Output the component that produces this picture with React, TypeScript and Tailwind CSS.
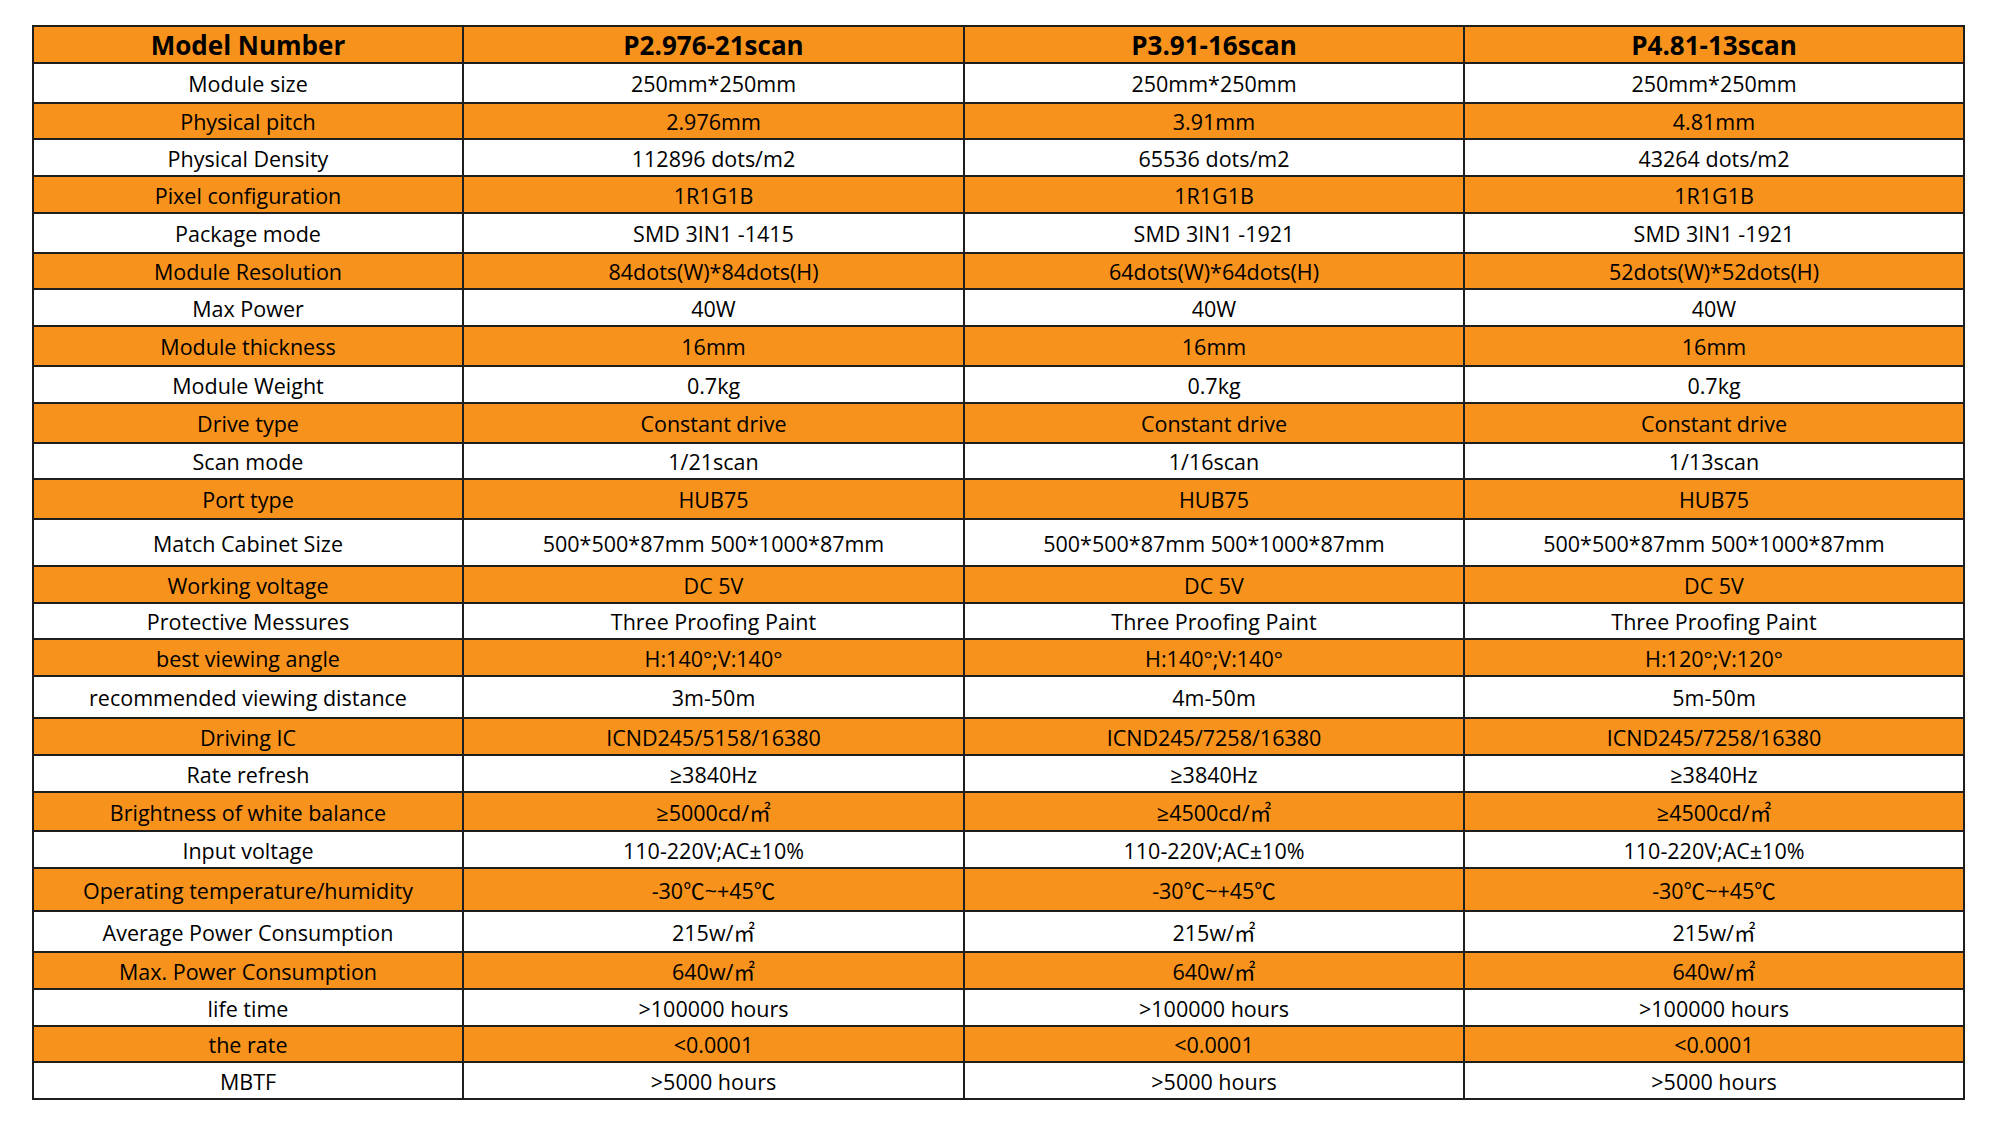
const font = { fontFamily: '"Open Sans", "Noto Sans CJK SC", sans-serif' };

// height class per row, taken from the spec sheet picture
const rows: { label: string; h: string; v: [string, string, string] }[] = [
  { label: "Module size", h: "h-[38px]", v: ["250mm*250mm", "250mm*250mm", "250mm*250mm"] },
  { label: "Physical pitch", h: "h-[34px]", v: ["2.976mm", "3.91mm", "4.81mm"] },
  { label: "Physical Density", h: "h-[35px]", v: ["112896 dots/m2", "65536 dots/m2", "43264 dots/m2"] },
  { label: "Pixel configuration", h: "h-[35px]", v: ["1R1G1B", "1R1G1B", "1R1G1B"] },
  { label: "Package mode", h: "h-[38px]", v: ["SMD 3IN1 -1415", "SMD 3IN1 -1921", "SMD 3IN1 -1921"] },
  { label: "Module Resolution", h: "h-[34px]", v: ["84dots(W)*84dots(H)", "64dots(W)*64dots(H)", "52dots(W)*52dots(H)"] },
  { label: "Max Power", h: "h-[35px]", v: ["40W", "40W", "40W"] },
  { label: "Module thickness", h: "h-[38px]", v: ["16mm", "16mm", "16mm"] },
  { label: "Module Weight", h: "h-[35px]", v: ["0.7kg", "0.7kg", "0.7kg"] },
  { label: "Drive type", h: "h-[38px]", v: ["Constant drive", "Constant drive", "Constant drive"] },
  { label: "Scan mode", h: "h-[34px]", v: ["1/21scan", "1/16scan", "1/13scan"] },
  { label: "Port type", h: "h-[38px]", v: ["HUB75", "HUB75", "HUB75"] },
  {
    label: "Match Cabinet Size",
    h: "h-[45px]",
    v: ["500*500*87mm 500*1000*87mm", "500*500*87mm 500*1000*87mm", "500*500*87mm 500*1000*87mm"],
  },
  { label: "Working voltage", h: "h-[35px]", v: ["DC 5V", "DC 5V", "DC 5V"] },
  { label: "Protective Messures", h: "h-[34px]", v: ["Three Proofing Paint", "Three Proofing Paint", "Three Proofing Paint"] },
  { label: "best viewing angle", h: "h-[35px]", v: ["H:140°;V:140°", "H:140°;V:140°", "H:120°;V:120°"] },
  { label: "recommended viewing distance", h: "h-[40px]", v: ["3m-50m", "4m-50m", "5m-50m"] },
  { label: "Driving IC", h: "h-[35px]", v: ["ICND245/5158/16380", "ICND245/7258/16380", "ICND245/7258/16380"] },
  { label: "Rate refresh", h: "h-[35px]", v: ["≥3840Hz", "≥3840Hz", "≥3840Hz"] },
  { label: "Brightness of white balance", h: "h-[37px]", v: ["≥5000cd/㎡", "≥4500cd/㎡", "≥4500cd/㎡"] },
  { label: "Input voltage", h: "h-[35px]", v: ["110-220V;AC±10%", "110-220V;AC±10%", "110-220V;AC±10%"] },
  { label: "Operating temperature/humidity", h: "h-[41px]", v: ["-30℃~+45℃", "-30℃~+45℃", "-30℃~+45℃"] },
  { label: "Average Power Consumption", h: "h-[39px]", v: ["215w/㎡", "215w/㎡", "215w/㎡"] },
  { label: "Max. Power Consumption", h: "h-[35px]", v: ["640w/㎡", "640w/㎡", "640w/㎡"] },
  { label: "life time", h: "h-[35px]", v: [">100000 hours", ">100000 hours", ">100000 hours"] },
  { label: "the rate", h: "h-[34px]", v: ["<0.0001", "<0.0001", "<0.0001"] },
  { label: "MBTF", h: "h-[35px]", v: [">5000 hours", ">5000 hours", ">5000 hours"] },
];

const models = ["P2.976-21scan", "P3.91-16scan", "P4.81-13scan"];

function Cell({ text, h, orange, bold }: { text: string; h: string; orange: boolean; bold?: boolean }) {
  return (
    <div
      className={`${h} flex items-center justify-center whitespace-nowrap text-black ${
        orange ? "bg-[#f7921c]" : "bg-white"
      } ${bold ? "text-[26px] font-bold" : "pt-[2px] text-[21.5px]"}`}
    >
      {text}
    </div>
  );
}

export default function App() {
  return (
    <div className="min-h-screen bg-white pt-[25px] pl-[32px]" style={font}>
      <div className="grid w-fit grid-cols-[428px_499px_498px_498px] gap-[2px] bg-[#1e1e1e] p-[2px] leading-none">
        {/* header */}
        <Cell text="Model Number" h="h-[35px]" orange bold />
        {models.map((m) => (
          <Cell key={m} text={m} h="h-[35px]" orange bold />
        ))}

        {rows.map((r, i) => {
          const orange = i % 2 === 1;
          return [
            <Cell key={r.label} text={r.label} h={r.h} orange={orange} />,
            ...r.v.map((v, j) => <Cell key={r.label + j} text={v} h={r.h} orange={orange} />),
          ];
        })}
      </div>
    </div>
  );
}
